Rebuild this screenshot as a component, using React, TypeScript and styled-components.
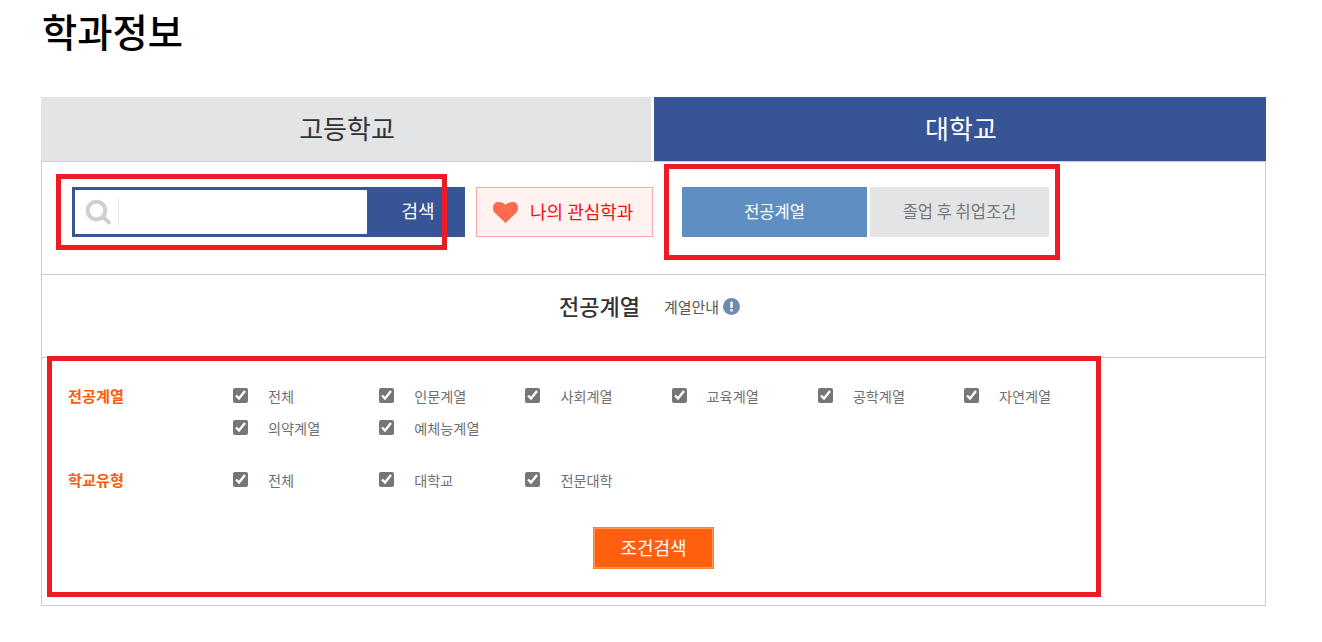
import React from "react";
import styled, { createGlobalStyle } from "styled-components";

const Global = createGlobalStyle`
  html, body { margin: 0; padding: 0; background: #fff; }
  body { font-family: "Noto Sans CJK KR", "Noto Sans", sans-serif; color: #333; }
  * { box-sizing: border-box; }
`;

const Page = styled.div`
  position: relative;
  width: 1322px;
  height: 642px;
  overflow: hidden;
  padding-left: 41px;
`;
const Title = styled.h1`
  margin: 0;
  height: 97px;
  padding: 5px 0 0 1px;
  font-size: 38.300px;
  line-height: 52px;
  font-weight: 500;
  color: #000;
`;
const Content = styled.div`
  width: 1225px;
`;
const Tabs = styled.div`
  display: flex;
  gap: 3px;
  height: 64px;
`;
const Tab = styled.div<{ $active?: boolean }>`
  flex: ${(p) => (p.$active ? "0 0 612px" : "0 0 610px")};
  display: flex;
  align-items: center;
  justify-content: center;
  padding: 0 0 4px 2px;
  font-size: 26px;
  background: ${(p) => (p.$active ? "#365496" : "#e3e4e6")};
  color: ${(p) => (p.$active ? "#fff" : "#333")};
`;
const Panel = styled.div`
  border: 1px solid #ccc;
  height: 445px;
`;
const Toolbar = styled.div`
  display: flex;
  align-items: flex-start;
  height: 113px;
  padding: 25px 0 0 30px;
  border-bottom: 1px solid #ccc;
`;
const SearchBox = styled.div`
  display: flex;
  width: 393px;
  height: 50px;
`;
const SearchField = styled.div`
  flex: 0 0 295px;
  display: flex;
  align-items: center;
  padding-left: 10px;
  border: 3px solid #365496;
  border-right: none;
  background: #fff;
`;
const SearchDivider = styled.span`
  width: 1px;
  height: 26px;
  margin-left: 7px;
  background: #e6e6e6;
`;
const SearchButton = styled.div`
  flex: 1;
  display: flex;
  align-items: center;
  justify-content: center;
  padding: 0 0 5px 4px;
  background: #365496;
  color: #fff;
  font-size: 18px;
`;
const FavButton = styled.div`
  display: flex;
  align-items: center;
  gap: 12px;
  width: 177px;
  height: 50px;
  margin-left: 11px;
  padding: 0 0 0 16px;
  border: 1px solid #ffa4a6;
  background: #fff2f1;
  color: #f01010;
  font-size: 18px;
`;
const FavLabel = styled.span`
  margin-top: -3px;
  white-space: nowrap;
`;
const Switcher = styled.div`
  display: flex;
  gap: 3px;
  margin-left: 29px;
`;
const SwitchButton = styled.div<{ $active?: boolean; $w: number }>`
  display: flex;
  align-items: center;
  justify-content: center;
  width: ${(p) => p.$w}px;
  height: 50px;
  padding-bottom: 2px;
  font-size: 16.500px;
  background: ${(p) => (p.$active ? "#5f8fc2" : "#e3e4e6")};
  color: ${(p) => (p.$active ? "#fff" : "#777")};
`;
const SectionHead = styled.div`
  display: flex;
  align-items: center;
  justify-content: center;
  height: 83px;
  padding: 0 8px 22px 0;
  border-bottom: 1px solid #ccc;
`;
const SectionTitle = styled.h2`
  margin: 0;
  font-size: 22px;
  font-weight: 500;
  color: #333;
`;
const GuideLink = styled.span`
  display: flex;
  align-items: center;
  gap: 4px;
  margin: 2px 0 0 24px;
  font-size: 15px;
  color: #555;
`;
const Filters = styled.div`
  padding-top: 30px;
`;
const Group = styled.div`
  display: flex;
  margin-bottom: 20px;
  padding-left: 26px;
`;
const GroupLabel = styled.div`
  flex: 0 0 164px;
  margin-top: -1px;
  font-size: 15.200px;
  line-height: 16px;
  font-weight: 700;
  color: #ff5a0a;
`;
const Options = styled.div`
  display: grid;
  grid-template-columns: repeat(6, 146.200px);
  grid-auto-rows: 32px;
`;
const Option = styled.label`
  display: flex;
  align-items: flex-start;
  font-size: 14.200px;
  line-height: 18px;
  color: #707070;
`;
const Check = styled.input`
  width: 15px;
  height: 15px;
  margin: 0 20px 0 1px;
  accent-color: #767676;
`;
const OptionText = styled.span`
  margin-top: -1px;
  white-space: nowrap;
`;
const SubmitRow = styled.div`
  display: flex;
  justify-content: center;
  margin-top: 23px;
`;
const Submit = styled.div`
  display: flex;
  align-items: center;
  justify-content: center;
  width: 121px;
  height: 42px;
  padding-bottom: 3px;
  border: 1px solid #f5852f;
  box-shadow: inset 0 0 0 1px #ff9850;
  background: #ff5f0e;
  color: #fff;
  font-size: 18px;
`;
const Mark = styled.div<{ $x: number; $y: number; $w: number; $h: number }>`
  position: absolute;
  left: ${(p) => p.$x}px;
  top: ${(p) => p.$y}px;
  width: ${(p) => p.$w}px;
  height: ${(p) => p.$h}px;
  border: 5px solid #ed1c24;
  pointer-events: none;
`;

const Magnifier = () => (
  <svg width="26" height="26" viewBox="0 0 26 26" fill="none">
    <circle cx="11.500" cy="11.500" r="8.800" stroke="#d0d0d0" strokeWidth="4" />
    <path d="M18.500 18.500l5.500 5" stroke="#d0d0d0" strokeWidth="4" strokeLinecap="round" />
  </svg>
);
const Heart = () => (
  <svg width="25" height="21" viewBox="0 0 25 21">
    <path
      d="M12.500 21L1.500 10.500C0 9 0 7 0 5.500 0 2 2.500 0 5.500 0 8.200 0 11 1 12.500 3 14 1 16.800 0 19.500 0 22.500 0 25 2 25 5.500 25 7 25 9 23.500 10.500Z"
      fill="#ff6b4e"
    />
  </svg>
);
const Info = () => (
  <svg width="17" height="17" viewBox="0 0 17 17">
    <circle cx="8.500" cy="8.500" r="8.500" fill="#6f8cb0" />
    <rect x="7.300" y="3.500" width="2.400" height="6.500" rx="1" fill="#fff" />
    <circle cx="8.500" cy="12.300" r="1.400" fill="#fff" />
  </svg>
);

const Item = ({ label }: { label: string }) => (
  <Option>
    <Check type="checkbox" defaultChecked />
    <OptionText>{label}</OptionText>
  </Option>
);

export default function App() {
  return (
    <Page>
      <Global />
      <Title>학과정보</Title>
      <Content>
        <Tabs>
          <Tab>고등학교</Tab>
          <Tab $active>대학교</Tab>
        </Tabs>
        <Panel>
          <Toolbar>
            <SearchBox>
              <SearchField>
                <Magnifier />
                <SearchDivider />
              </SearchField>
              <SearchButton>검색</SearchButton>
            </SearchBox>
            <FavButton>
              <Heart />
              <FavLabel>나의 관심학과</FavLabel>
            </FavButton>
            <Switcher>
              <SwitchButton $active $w={185}>전공계열</SwitchButton>
              <SwitchButton $w={179}>졸업 후 취업조건</SwitchButton>
            </Switcher>
          </Toolbar>
          <SectionHead>
            <SectionTitle>전공계열</SectionTitle>
            <GuideLink>
              계열안내
              <Info />
            </GuideLink>
          </SectionHead>
          <Filters>
            <Group>
              <GroupLabel>전공계열</GroupLabel>
              <Options>
                {["전체", "인문계열", "사회계열", "교육계열", "공학계열", "자연계열", "의약계열", "예체능계열"].map((t) => (
                  <Item key={t} label={t} />
                ))}
              </Options>
            </Group>
            <Group>
              <GroupLabel>학교유형</GroupLabel>
              <Options>
                {["전체", "대학교", "전문대학"].map((t) => (
                  <Item key={t} label={t} />
                ))}
              </Options>
            </Group>
            <SubmitRow>
              <Submit>조건검색</Submit>
            </SubmitRow>
          </Filters>
        </Panel>
      </Content>
      <Mark $x={56} $y={174} $w={391} $h={76} />
      <Mark $x={664} $y={164} $w={396} $h={96} />
      <Mark $x={47} $y={356} $w={1054} $h={241} />
    </Page>
  );
}
